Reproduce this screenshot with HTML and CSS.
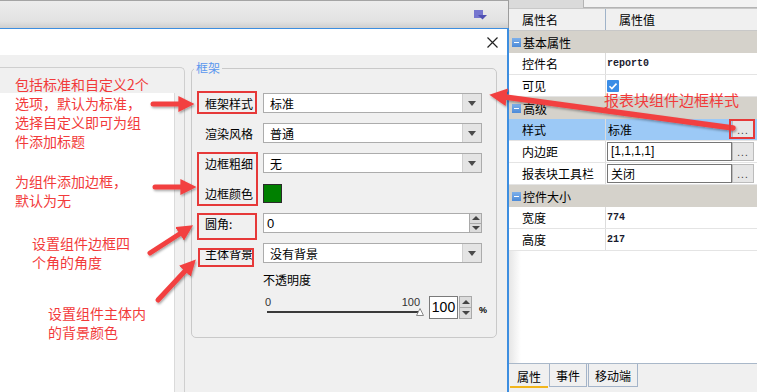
FILE: index.html
```html
<!DOCTYPE html>
<html lang="zh-CN">
<head>
  <meta charset="UTF-8" />
  <title>报表块属性</title>
  <link rel="stylesheet" href="styles.css">
</head>
<body>
<div class="screen">
  <div class="main">
    <div class="toolbar">
      <svg class="tb-icon" width="13" height="10" viewBox="0 0 13 10"><rect x="0" y="0" width="9" height="8" fill="#7676cf"/><path d="M4 5h9l-4.5 4.5z" fill="#5050b2"/></svg>
    </div>
    <div class="dialog">
      <div class="dlg-head">
        <svg width="11" height="11" viewBox="0 0 11 11"><path d="M0.5 0.5l10 10M10.5 0.5l-10 10" stroke="#222" stroke-width="1.2"/></svg>
      </div>
      <div class="dlg-body">
        <div class="side"><div class="side-panel"></div></div>
        <fieldset class="frame">
          <legend>框架</legend>
          <div class="frame-body">
            <div class="row"><span class="lbl">框架样式</span><div class="select"><span class="val">标准</span><span class="drop"></span></div></div>
            <div class="row"><span class="lbl">渲染风格</span><div class="select"><span class="val">普通</span><span class="drop"></span></div></div>
            <div class="row"><span class="lbl">边框粗细</span><div class="select"><span class="val">无</span><span class="drop"></span></div></div>
            <div class="row"><span class="lbl">边框颜色</span><span class="swatch"></span></div>
            <div class="row"><span class="lbl">圆角:</span><div class="spinbox"><span class="val num-val">0</span><span class="spin"><i class="up"></i><i class="down"></i></span></div></div>
            <div class="row"><span class="lbl">主体背景</span><div class="select"><span class="val">没有背景</span><span class="drop"></span></div></div>
            <div class="opacity">不透明度</div>
            <div class="slider-row">
              <div class="slider">
                <div class="scale"><span>0</span><span>100</span></div>
                <div class="track">
                  <svg class="thumb" width="8" height="8" viewBox="0 0 8 8"><path d="M4 0.5L7.5 7.5H0.5z" fill="#fff" stroke="#888"/></svg>
                </div>
              </div>
              <div class="num">100</div>
              <span class="spin tall"><i class="up"></i><i class="down"></i></span>
              <span class="pct">%</span>
            </div>
          </div>
        </fieldset>
      </div>
    </div>
  </div>

  <div class="props">
    <div class="props-top"><span class="search"></span></div>
    <div class="prop-head"><span>属性名</span><span>属性值</span></div>
    <div class="cat"><i class="minus"></i>基本属性</div>
    <div class="prow"><span class="k">控件名</span><span class="v code">report0</span></div>
    <div class="prow"><span class="k">可见</span><span class="v"><svg class="check" width="12" height="12" viewBox="0 0 12 12"><rect width="12" height="12" rx="1" fill="#3b8de6"/><path d="M2.5 6.2l2.4 2.4 4.6-5" stroke="#fff" stroke-width="1.6" fill="none"/></svg></span></div>
    <div class="cat"><i class="minus"></i>高级</div>
    <div class="prow sel"><span class="k">样式</span><span class="v"><span class="plain">标准</span><span class="dots">...</span></span></div>
    <div class="prow"><span class="k">内边距</span><span class="v"><span class="field latin">[1,1,1,1]</span><span class="dots">...</span></span></div>
    <div class="prow"><span class="k">报表块工具栏</span><span class="v"><span class="field">关闭</span><span class="dots">...</span></span></div>
    <div class="cat"><i class="minus"></i>控件大小</div>
    <div class="prow"><span class="k">宽度</span><span class="v code">774</span></div>
    <div class="prow"><span class="k">高度</span><span class="v code">217</span></div>
    <div class="prop-fill"></div>
    <div class="tabs"><span class="tab on">属性</span><span class="tab">事件</span><span class="tab">移动端</span></div>
  </div>

  <!-- annotations drawn over the screenshot -->
  <div class="note n1">包括标准和自定义2个<br>选项，默认为标准，<br>选择自定义即可为组<br>件添加标题</div>
  <div class="note n2">为组件添加边框，<br>默认为无</div>
  <div class="note n3">设置组件边框四<br>个角的角度</div>
  <div class="note n4">设置组件主体内<br>的背景颜色</div>
  <div class="note n5">报表块组件边框样式</div>

  <svg class="marks" width="757" height="392" viewBox="0 0 757 392">
    <defs>
      <marker id="head" viewBox="0 0 10 10" refX="1" refY="5" markerWidth="3.2" markerHeight="3.2" orient="auto"><path d="M0 0L10 5L0 10z" fill="#f24141"/></marker>
      <filter id="sh" x="-20%" y="-50%" width="140%" height="200%"><feDropShadow dx="1" dy="1.5" stdDeviation="1" flood-color="#000" flood-opacity="0.35"/></filter>
    </defs>
    <g filter="url(#sh)" stroke="#f24141" stroke-width="5" stroke-linecap="round" fill="none">
      <line x1="153" y1="104" x2="180" y2="104" marker-end="url(#head)"/>
      <line x1="155" y1="187" x2="182" y2="187" marker-end="url(#head)"/>
      <line x1="150" y1="253" x2="181" y2="233" marker-end="url(#head)"/>
      <line x1="158" y1="300" x2="186" y2="270" marker-end="url(#head)"/>
      <line x1="733" y1="128" x2="505" y2="97" stroke-width="5.5" marker-end="url(#head)"/>
    </g>
    <g fill="none" stroke="#e63939" stroke-width="2">
      <rect x="198" y="92" width="58" height="21"/>
      <rect x="198" y="153" width="59" height="52"/>
      <rect x="198" y="214" width="58" height="25"/>
      <rect x="199" y="249" width="54" height="17"/>
      <rect x="730" y="120" width="24" height="18"/>
    </g>
  </svg>
</div>
</body>
</html>
```

FILE: styles.css
```css
body {
  margin: 0;
  font-family: "Noto Sans CJK SC", "Noto Sans", sans-serif;
  font-size: 12px;
  color: #000;
}
.screen {
  position: relative;
  width: 757px;
  height: 392px;
  overflow: hidden;
  display: flex;
  background: #f0f0f0;
}
.main {
  width: 509px;
  display: flex;
  flex-direction: column;
}
.toolbar {
  height: 28px;
  box-sizing: border-box;
  border-top: 1px solid #a4a4a4;
  border-right: 1px solid #9c9c9c;
  background: linear-gradient(#ececec, #e2e2e2 75%, #cfcfcf);
  display: flex;
  justify-content: flex-end;
  align-items: center;
  padding-right: 21px;
}
.dialog {
  flex: 1;
  display: flex;
  flex-direction: column;
  border-top: 1px solid #3d8ee0;
  border-right: 2px solid #3d8ee0;
}
.dlg-head {
  height: 26px;
  background: #fff;
  display: flex;
  justify-content: flex-end;
  align-items: center;
  padding-right: 9px;
}
.dlg-body {
  flex: 1;
  display: flex;
  align-items: flex-start;
  padding-top: 6px;
}
.side {
  width: 185px;
  align-self: stretch;
  margin-top: 6px;
  box-sizing: border-box;
  border-top: 1px solid #cfcfcf;
  border-right: 1px solid #cfcfcf;
  border-top-right-radius: 5px;
  padding-top: 25px;
  display: flex;
}
.side-panel {
  width: 174px;
  background: #fff;
  border-right: 1px solid #dadada;
}

/* 框架 group */
.frame {
  margin: 0 0 0 6px;
  padding: 0;
  width: 306px;
  height: 277px;
  box-sizing: border-box;
  border: 1px solid #c9c9c9;
  border-radius: 5px;
  min-width: 0;
}
.frame legend {
  margin-left: 2px;
  padding: 0 2px;
  line-height: 14px;
  color: #5b97ee;
}
.frame-body {
  padding: 18px 0 0 13px;
}
.row {
  display: flex;
  align-items: center;
  height: 20px;
  margin-bottom: 10px;
}
.lbl {
  width: 58px;
  flex: none;
}
.select, .spinbox {
  width: 219px;
  height: 20px;
  box-sizing: border-box;
  border: 1px solid #acacac;
  background: #fff;
  display: flex;
  align-items: center;
}
.val {
  flex: 1;
  padding-left: 6px;
}
.num-val {
  padding-left: 3px;
  font-family: "Liberation Sans", sans-serif;
  font-size: 13px;
}
.drop {
  width: 18px;
  height: 100%;
  background: #e4e4e4;
  border-left: 1px solid #d0d0d0;
  display: flex;
  align-items: center;
  justify-content: center;
}
.drop::after {
  content: "";
  border-left: 4px solid transparent;
  border-right: 4px solid transparent;
  border-top: 5px solid #4a4a4a;
}
.spinbox {
  border-right: 0;
}
.spin {
  width: 13px;
  height: 20px;
  display: flex;
  flex-direction: column;
  margin-top: -1px;
  margin-bottom: -1px;
}
.spin i {
  flex: 1;
  background: #dcdcdc;
  border: 1px solid #a9a9a9;
  display: flex;
  align-items: center;
  justify-content: center;
}
.spin i + i {
  border-top: 0;
}
.spin .up::after {
  content: "";
  border-left: 4px solid transparent;
  border-right: 4px solid transparent;
  border-bottom: 4px solid #444;
}
.spin .down::after {
  content: "";
  border-left: 4px solid transparent;
  border-right: 4px solid transparent;
  border-top: 4px solid #444;
}
.swatch {
  width: 19px;
  height: 19px;
  box-sizing: border-box;
  background: #008000;
  border: 1px solid #2b2b2b;
}
.opacity {
  margin-top: 7px;
  padding-left: 58px;
  line-height: 14px;
}
.slider-row {
  display: flex;
  align-items: flex-start;
  margin-top: 9px;
  padding-left: 58px;
  height: 23px;
}
.slider {
  width: 160px;
}
.scale {
  display: flex;
  justify-content: space-between;
  height: 13px;
  line-height: 13px;
  padding: 0 3px 0 2px;
  font-family: "Liberation Sans", sans-serif;
  font-size: 11px;
  color: #333;
}
.track {
  position: relative;
  height: 2px;
  margin: 2px 3px 0 4px;
  background: #3a3a3a;
}
.thumb {
  position: absolute;
  right: -4px;
  top: -3px;
}
.num {
  width: 29px;
  height: 23px;
  box-sizing: border-box;
  margin-left: 6px;
  border: 1px solid #7a7a7a;
  background: #fff;
  font-family: "Liberation Sans", sans-serif;
  font-size: 14px;
  line-height: 21px;
  text-align: center;
}
.spin.tall {
  height: 23px;
  margin: 0 0 0 1px;
}
.pct {
  margin: 9px 0 0 7px;
  font-family: "Liberation Sans", sans-serif;
  font-weight: bold;
  font-size: 9px;
}

/* property sheet */
.props {
  width: 248px;
  display: flex;
  flex-direction: column;
  background: #f0f0f0;
}
.props-top {
  height: 8px;
  display: flex;
  background: #dadada;
}
.search {
  margin-left: 74px;
  flex: 1;
  background: #f2f2f2;
  border-left: 1px solid #b4b4b4;
  border-bottom: 1px solid #b4b4b4;
}
.prop-head {
  height: 23px;
  box-sizing: border-box;
  display: grid;
  grid-template-columns: 97px 1fr;
  background: #f0f0f0;
  border-top: 1px solid #c8c8c8;
  border-bottom: 1px solid #c8c8c8;
}
.prop-head span {
  display: flex;
  align-items: center;
  padding-left: 13px;
}
.prop-head span:first-child {
  border-right: 1px solid #9fb3c9;
}
.cat {
  height: 22px;
  box-sizing: border-box;
  display: flex;
  align-items: center;
  padding-left: 3px;
  background: #d5d2cb;
}
.minus {
  width: 9px;
  height: 9px;
  margin-right: 2px;
  background: linear-gradient(#7eb0ea, #4c8ad8);
  display: flex;
  align-items: center;
  justify-content: center;
}
.minus::after {
  content: "";
  width: 5px;
  height: 1px;
  background: #fff;
}
.prow {
  height: 22px;
  box-sizing: border-box;
  display: grid;
  grid-template-columns: 97px 1fr;
  background: #fff;
  border-bottom: 1px solid #e4e4e4;
}
.prow .k {
  display: flex;
  align-items: center;
  padding-left: 13px;
  border-right: 1px solid #dcdcdc;
}
.prow .v {
  display: flex;
  align-items: center;
  padding: 0 3px 0 1px;
}
.prow.sel {
  background: #9cc9f6;
}
.code {
  font-family: "Liberation Mono", monospace;
  font-weight: bold;
  font-size: 10px;
  color: #1a1a2e;
}
.check {
  display: block;
}
.plain {
  flex: 1;
  padding-left: 1px;
}
.field {
  flex: 1;
  height: 19px;
  box-sizing: border-box;
  border: 1px solid #767676;
  background: #fff;
  padding-left: 3px;
  line-height: 17px;
}
.latin {
  font-family: "Liberation Sans", sans-serif;
  font-size: 12px;
}
.dots {
  width: 22px;
  height: 19px;
  box-sizing: border-box;
  background: #e6e6e6;
  border: 1px solid #bcbcbc;
  font-family: "Liberation Sans", sans-serif;
  font-size: 10px;
  line-height: 20px;
  letter-spacing: 1px;
  text-align: center;
  color: #333;
}
.prop-fill {
  flex: 1;
  background: linear-gradient(to right, #e6e6e6, #fff 12px);
  border-bottom: 1px solid #a9b8c9;
}
.tabs {
  height: 28px;
  display: flex;
  padding-left: 1px;
}
.tab {
  height: 22px;
  padding: 0 6px;
  display: flex;
  align-items: center;
  border: 1px solid #a4b4c9;
  border-top: 0;
  margin-left: 1px;
}
.tab.on {
  width: 38px;
  box-sizing: border-box;
  justify-content: center;
  border: 0;
  margin-left: 0;
  height: 24px;
  box-shadow: inset 0 -2px 0 #f2b61c;
}

/* annotations */
.note {
  position: absolute;
  color: #f23a3a;
  font-size: 14px;
  line-height: 19px;
  white-space: nowrap;
}
.n1 { left: 15px; top: 75px; }
.n2 { left: 15px; top: 172px; }
.n3 { left: 32px; top: 234px; }
.n4 { left: 48px; top: 304px; }
.n5 { left: 604px; top: 90px; font-size: 15px; }
.marks {
  position: absolute;
  left: 0;
  top: 0;
  pointer-events: none;
}
```
